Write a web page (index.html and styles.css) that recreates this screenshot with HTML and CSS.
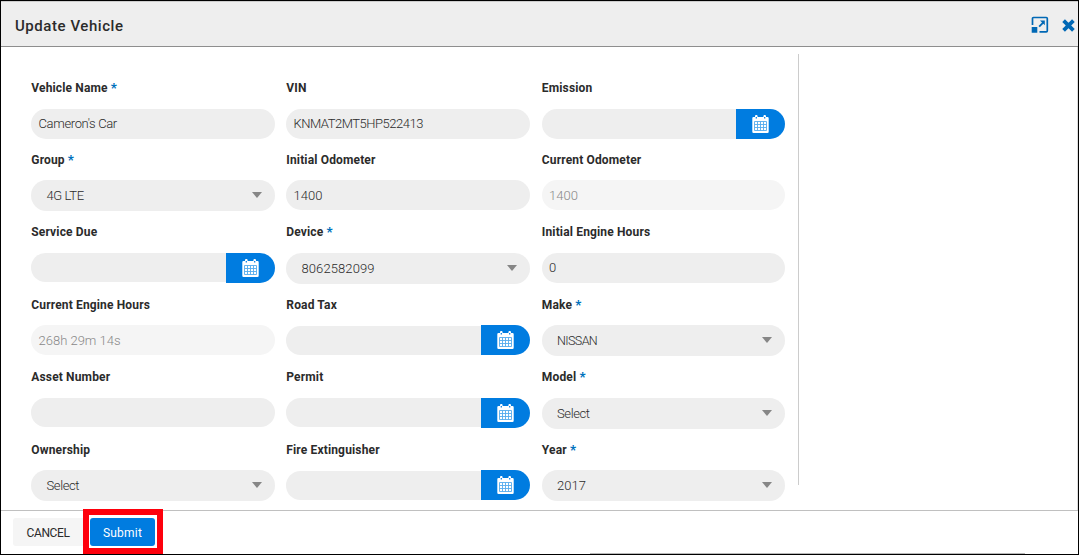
FILE: index.html
```html
<!DOCTYPE html>
<html lang="en">
<head>
<meta charset="utf-8">
<title>Update Vehicle</title>
<link rel="stylesheet" href="styles.css">
</head>
<body>
<svg width="0" height="0" class="defs">
  <symbol id="cal" viewBox="0 0 17 18">
    <path fill="#fff" d="M1.500 2H3V1.200a1.300 1.300 0 0 1 2.600 0V2h5.800v-.8a1.300 1.300 0 0 1 2.600 0V2h1.500q1.200 0 1.200 1.200v13.600q0 1.200-1.200 1.200h-14Q.3 18 .3 16.800V3.200Q.3 2 1.500 2Z"/>
    <path fill="#007ce0" d="M3.700 2h1.200v1.600H3.700zM12.100 2h1.200v1.600h-1.200z"/>
    <path fill="none" stroke="#55abed" stroke-width=".9" d="M2.500 6.500h12v9h-12zM2.500 9.500h12M2.500 12.500h12M5.500 6.500v9M8.500 6.500v9M11.500 6.500v9"/>
  </symbol>
</svg>
<div class="dialog">
  <header class="header">
    <h1 class="title">Update Vehicle</h1>
    <div class="tools">
      <svg class="expand" width="18" height="18" viewBox="0 0 18 18"><path fill="none" stroke="#0068b5" stroke-width="1.700" d="M1.500 9V2.500q0-1 1-1h12.800q1 0 1 1v12.300q0 1-1 1H8.500"/><path fill="#0068b5" d="M.7 11h5.600v5.800H.7zM9 4.500h4.800V9.300l-1.500-1.500-3.500 3.500-1.300-1.300 3.500-3.500z"/></svg>
      <svg class="close" width="13" height="13" viewBox="0 0 13 13"><path fill="none" stroke="#0068b5" stroke-width="3.800" d="M1.600 1.600l9.800 9.800M11.400 1.600l-9.800 9.800"/></svg>
    </div>
  </header>
  <main class="main">
    <div class="form">
      <div class="field"><label class="label">Vehicle Name <b>*</b></label><div class="input name">Cameron's Car</div></div>
      <div class="field"><label class="label">VIN</label><div class="input vin">KNMAT2MT5HP522413</div></div>
      <div class="field"><label class="label">Emission</label><div class="date full"><span class="btn"><svg><use href="#cal"/></svg></span></div></div>

      <div class="field low"><label class="label">Group <b>*</b></label><div class="input select word">4G LTE</div></div>
      <div class="field low"><label class="label">Initial Odometer</label><div class="input">1400</div></div>
      <div class="field low"><label class="label">Current Odometer</label><div class="input disabled">1400</div></div>

      <div class="field"><label class="label">Service Due</label><div class="date"><span class="btn"><svg><use href="#cal"/></svg></span></div></div>
      <div class="field"><label class="label">Device <b>*</b></label><div class="input select device">8062582099</div></div>
      <div class="field"><label class="label">Initial Engine Hours</label><div class="input">0</div></div>

      <div class="field low"><label class="label">Current Engine Hours</label><div class="input disabled">268h 29m 14s</div></div>
      <div class="field low"><label class="label">Road Tax</label><div class="date"><span class="btn"><svg><use href="#cal"/></svg></span></div></div>
      <div class="field low"><label class="label">Make <b>*</b></label><div class="input select caps">NISSAN</div></div>

      <div class="field"><label class="label">Asset Number</label><div class="input short"></div></div>
      <div class="field"><label class="label">Permit</label><div class="date"><span class="btn"><svg><use href="#cal"/></svg></span></div></div>
      <div class="field"><label class="label">Model <b>*</b></label><div class="input select word">Select</div></div>

      <div class="field low"><label class="label">Ownership</label><div class="input select word">Select</div></div>
      <div class="field low"><label class="label">Fire Extinguisher</label><div class="date"><span class="btn"><svg><use href="#cal"/></svg></span></div></div>
      <div class="field low"><label class="label">Year <b>*</b></label><div class="input select">2017</div></div>
    </div>
    <div class="divider"></div>
  </main>
  <footer class="footer">
    <button class="cancel">CANCEL</button>
    <div class="highlight"><button class="submit">Submit</button></div>
  </footer>
</div>
</body>
</html>
```

FILE: styles.css
```css
* { box-sizing: border-box; }
body { margin: 0; background: #fff; font-family: Roboto, "Liberation Sans", sans-serif; color: #2b2b2b; }
.defs { display: block; }
.dialog { width: 1079px; height: 555px; border: 1px solid #000; display: flex; flex-direction: column; overflow: hidden; }
.header { height: 46px; flex: none; background: #eee; border-top: 1px solid #ccc; border-bottom: 1px solid #8e8e8e; display: flex; justify-content: space-between; padding: 0 3px 0 14px; }
.title { margin: 0; font-size: 15px; font-weight: 500; line-height: 48px; letter-spacing: .55px; }
.tools { display: flex; gap: 13px; align-items: center; }
.expand, .close { margin-top: 2px; }
.main { height: 463px; flex: none; display: flex; border-right: 1px solid #ddd; padding-top: 7px; }
.form { width: 797px; padding: 24px 0 0 30px; display: grid; grid-template-columns: 255px 255.500px 256.500px; grid-template-rows: 71px 73px 72px 73px 72px 62px; }
.field { display: flex; flex-direction: column; width: 244px; }
.field:nth-child(3n) { width: 243.500px; }
.label { height: 31px; font-size: 12px; font-weight: 700; line-height: 20px; white-space: nowrap; letter-spacing: .15px; padding-left: .3px; }
.low .label { line-height: 22px; }
.label b { color: #0071bc; font-size: 13px; line-height: 1; }
.input { height: 30px; border-radius: 15px; background: #eee; font-size: 13px; line-height: 30px; padding: 0 7.500px; font-weight: 300; white-space: nowrap; }
.low .input { line-height: 32px; }
.short { height: 29px; }
.name { letter-spacing: -.35px; }
.word { letter-spacing: -.4px; }
.vin { letter-spacing: -.48px; }
.caps { font-size: 12.500px; letter-spacing: -.6px; }
.device { letter-spacing: .1px; }
.select, .low .select { height: 31px; border-radius: 16px; padding: 0 13px 0 15.500px; display: flex; align-items: center; justify-content: space-between; line-height: 30px; }
.select::after { content: ""; border: 5.500px solid transparent; border-top: 6px solid #868686; border-bottom: 0; margin-bottom: 2px; }
.disabled { background: #f5f5f5; color: #888; }
.date { height: 30px; display: flex; align-items: flex-start; }
.low .date { align-items: flex-end; }
.date::before { content: ""; flex: 1; height: 29px; border-radius: 15px 0 0 15px; background: #eee; }
.full::before { height: 30px; }
.btn { width: 49px; height: 30px; background: #007ce0; border-radius: 0 15px 15px 0; display: flex; align-items: center; justify-content: center; }
.btn svg { width: 17px; height: 18px; margin-right: 1px; }
.divider { width: 1px; height: 431px; background: #ccc; }
.footer { height: 44px; flex: none; border-top: 1px solid #c0c0c0; display: flex; padding-left: 12px; background: linear-gradient(#b8b8b8, #b8b8b8) 589px 42px / 435px 1px no-repeat; }
button { font-family: inherit; font-size: 12px; border: 0; border-radius: 3px; height: 28px; padding: 2px 0 0; }
.cancel { width: 70px; margin-top: 7px; background: #f5f5f5; color: #2b2b2b; border-radius: 3px 0 0 3px; letter-spacing: -.4px; }
.highlight { width: 80px; height: 45px; margin-top: -2px; border: 6px solid #fe000c; padding: 3px 1px; position: relative; background: #fff; }
.submit { width: 65px; background: #007ce0; color: #fff; letter-spacing: .2px; }
```
